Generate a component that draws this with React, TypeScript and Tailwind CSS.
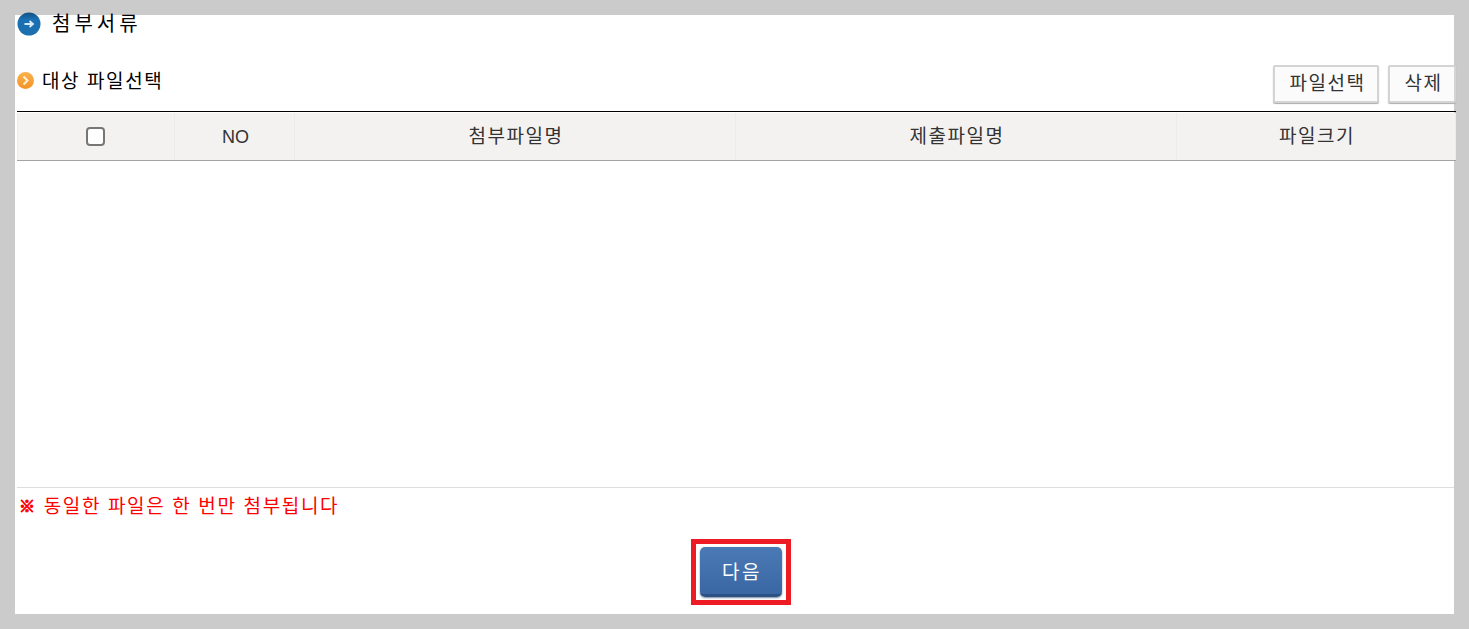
const font = "font-['Liberation_Sans','Noto_Sans_CJK_KR',sans-serif]";

const columns = [
  { label: "NO", width: "w-[120px]", text: "text-[18px] tracking-[0px]" },
  { label: "첨부파일명", width: "w-[441px]", text: "text-[19px] tracking-[1.5px]" },
  { label: "제출파일명", width: "w-[441px]", text: "text-[19px] tracking-[1.5px]" },
  { label: "파일크기", width: "w-[279px]", text: "text-[19px] tracking-[1.5px]" },
];

function RoundArrow() {
  return (
    <svg className="mt-[-3px] size-[24px] shrink-0" viewBox="0 0 24 24">
      <defs>
        <linearGradient id="blue" x1="0" y1="0" x2="0" y2="1">
          <stop offset="0" stopColor="#14507f" />
          <stop offset="0.3" stopColor="#1a70b4" />
          <stop offset="1" stopColor="#1c6fae" />
        </linearGradient>
      </defs>
      <circle cx="12" cy="12" r="11.5" fill="url(#blue)" />
      <path d="M7.5 12h8M12.5 9l3.5 3-3.5 3" fill="none" stroke="#d9e9f5" strokeWidth="1.8" />
    </svg>
  );
}

function OrangeArrow() {
  return (
    <svg className="mt-[3px] size-[17px] shrink-0" viewBox="0 0 17 17">
      <defs>
        <linearGradient id="orange" x1="0" y1="0" x2="0" y2="1">
          <stop offset="0" stopColor="#f9b24e" />
          <stop offset="1" stopColor="#f59322" />
        </linearGradient>
      </defs>
      <circle cx="8.5" cy="8.5" r="8.5" fill="url(#orange)" />
      <path d="M6.5 4.5l4 4-4 4" fill="none" stroke="#fff1d8" strokeWidth="2" />
    </svg>
  );
}

function ToolButton({ label, className }: { label: string; className: string }) {
  return (
    <button
      className={`h-[38px] rounded-[2px] border-2 border-[#d4d4d4] bg-[#fbfbfb] pl-[3px] text-[19px] tracking-[1.5px] text-[#333] shadow-[0_1px_1px_#aaa] ${className}`}
      type="button"
    >
      {label}
    </button>
  );
}

export default function App() {
  return (
    <div className={`${font} h-[629px] overflow-hidden bg-[#cbcbcb] pt-[15px] pl-[15px]`}>
      <main className="flex h-[599px] w-[1439px] flex-col bg-white">
        <div className="flex h-[19px] items-start pl-[2px]">
          <RoundArrow />
          <h2 className="ml-[11px] mt-[-3px] text-[20px] leading-[24px] tracking-[4px] text-black">첨부서류</h2>
        </div>

        <div className="mt-[31px] flex h-[46px] items-start pl-[2px]">
          <div className="mt-[4px] flex items-start">
            <OrangeArrow />
            <h3 className="ml-[8px] mt-[1px] text-[19px] leading-[24px] tracking-[1.6px] text-black">대상 파일선택</h3>
          </div>
          <div className="ml-auto mr-[-2px] flex gap-[9px]">
            <ToolButton label="파일선택" className="w-[106px]" />
            <ToolButton label="삭제" className="w-[68px]" />
          </div>
        </div>

        <div className="ml-[2px] w-[1439px] border-t border-black pt-[1px]">
          <div className="flex h-[48px] border-b border-[#a3a3a3] bg-[#f4f2f0] text-[#333]">
            <div className="flex w-[158px] items-center justify-center border-x border-[#ebebe9] pr-[1px]">
              <input
                aria-label="전체 선택"
                className="size-[19px] appearance-none rounded-[4px] border-2 border-[#767676] bg-white"
                type="checkbox"
              />
            </div>
            {columns.map((col) => (
              <div
                className={`flex items-center justify-center border-r border-[#ebebe9] pl-[2px] pt-[2px] ${col.width} ${col.text}`}
                key={col.label}
              >
                {col.label}
              </div>
            ))}
          </div>
        </div>

        <div className="h-[326px]" />

        <div className="ml-[2px] flex h-[39px] items-start border-t border-[#dedede] pt-[7px] text-[19px] leading-[24px] tracking-[1.65px] text-[#fe0000]">
          <span className="ml-[2px] mr-[7px] text-[16px] [-webkit-text-stroke:1px_#fe0000]">※</span>
          <span>동일한 파일은 한 번만 첨부됩니다</span>
        </div>

        <div className="mt-[13px] flex justify-center pl-[12px]">
          <div className="border-[5px] border-[#ed1c24] px-[4px] py-[3px]">
            <button
              className="h-[50px] w-[82px] rounded-[5px] border-b-[3px] border-[#2b5283] bg-gradient-to-b from-[#4a7ab5] to-[#3a67a3] pl-[3px] pt-[5px] text-[19px] tracking-[2.5px] text-white shadow-[0_1px_2px_#7a8ba5]"
              type="button"
            >
              다음
            </button>
          </div>
        </div>
      </main>
    </div>
  );
}
